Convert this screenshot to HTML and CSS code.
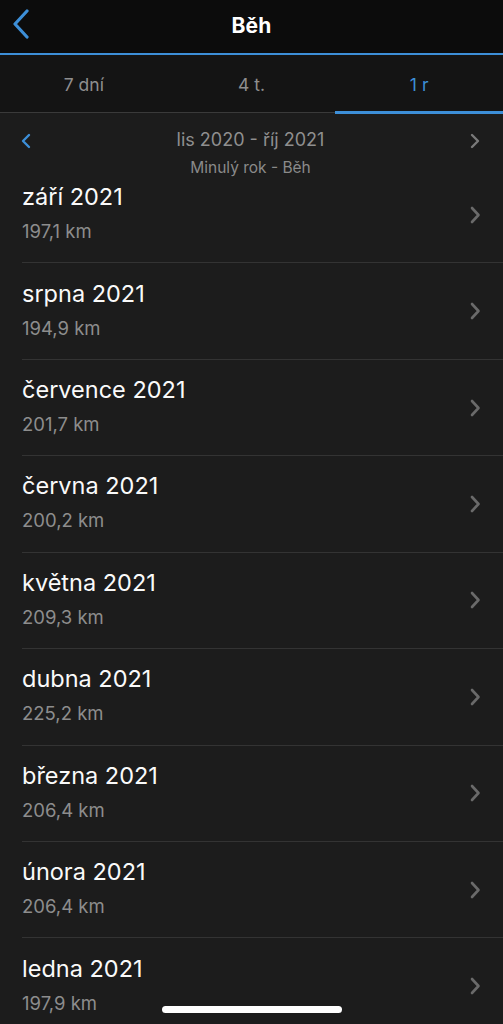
FILE: index.html
```html
<!DOCTYPE html>
<html lang="cs">
<head>
<meta charset="utf-8">
<title>Běh</title>
<link rel="stylesheet" href="styles.css">
</head>
<body>
<div class="app">
  <header class="nav">
    <svg class="back" width="22" height="30" viewBox="0 0 22 30"><path d="M17 2 L5 15 L17 28" fill="none" stroke="#3d8fd8" stroke-width="3.2" stroke-linecap="round" stroke-linejoin="round"/></svg>
    <h1 class="nav-title">Běh</h1>
  </header>
  <nav class="tabs">
    <div class="tab">7 dní</div>
    <div class="tab">4 t.</div>
    <div class="tab active">1 r</div>
  </nav>
  <section class="period">
    <svg class="pchev left" width="12" height="16" viewBox="0 0 12 16"><path d="M9 2 L3 8 L9 14" fill="none" stroke="#3d8fd8" stroke-width="2.4" stroke-linecap="round" stroke-linejoin="round"/></svg>
    <div class="period-text">
      <div class="period-range">lis 2020 - říj 2021</div>
      <div class="period-sub">Minulý rok - Běh</div>
    </div>
    <svg class="pchev right" width="12" height="16" viewBox="0 0 12 16"><path d="M3 2 L9 8 L3 14" fill="none" stroke="#7a7a7a" stroke-width="2.4" stroke-linecap="round" stroke-linejoin="round"/></svg>
  </section>
  <ul class="list">
    <li class="item"><div class="item-text"><div class="item-title">září 2021</div><div class="item-sub">197,1 km</div></div><svg class="chev" width="12" height="18" viewBox="0 0 12 18"><path d="M3 2 L9.5 9 L3 16" fill="none" stroke="#6a6a6a" stroke-width="2.6" stroke-linecap="round" stroke-linejoin="round"/></svg></li>
    <li class="item"><div class="item-text"><div class="item-title">srpna 2021</div><div class="item-sub">194,9 km</div></div><svg class="chev" width="12" height="18" viewBox="0 0 12 18"><path d="M3 2 L9.5 9 L3 16" fill="none" stroke="#6a6a6a" stroke-width="2.6" stroke-linecap="round" stroke-linejoin="round"/></svg></li>
    <li class="item"><div class="item-text"><div class="item-title">července 2021</div><div class="item-sub">201,7 km</div></div><svg class="chev" width="12" height="18" viewBox="0 0 12 18"><path d="M3 2 L9.5 9 L3 16" fill="none" stroke="#6a6a6a" stroke-width="2.6" stroke-linecap="round" stroke-linejoin="round"/></svg></li>
    <li class="item"><div class="item-text"><div class="item-title">června 2021</div><div class="item-sub">200,2 km</div></div><svg class="chev" width="12" height="18" viewBox="0 0 12 18"><path d="M3 2 L9.5 9 L3 16" fill="none" stroke="#6a6a6a" stroke-width="2.6" stroke-linecap="round" stroke-linejoin="round"/></svg></li>
    <li class="item"><div class="item-text"><div class="item-title">května 2021</div><div class="item-sub">209,3 km</div></div><svg class="chev" width="12" height="18" viewBox="0 0 12 18"><path d="M3 2 L9.5 9 L3 16" fill="none" stroke="#6a6a6a" stroke-width="2.6" stroke-linecap="round" stroke-linejoin="round"/></svg></li>
    <li class="item"><div class="item-text"><div class="item-title">dubna 2021</div><div class="item-sub">225,2 km</div></div><svg class="chev" width="12" height="18" viewBox="0 0 12 18"><path d="M3 2 L9.5 9 L3 16" fill="none" stroke="#6a6a6a" stroke-width="2.6" stroke-linecap="round" stroke-linejoin="round"/></svg></li>
    <li class="item"><div class="item-text"><div class="item-title">března 2021</div><div class="item-sub">206,4 km</div></div><svg class="chev" width="12" height="18" viewBox="0 0 12 18"><path d="M3 2 L9.5 9 L3 16" fill="none" stroke="#6a6a6a" stroke-width="2.6" stroke-linecap="round" stroke-linejoin="round"/></svg></li>
    <li class="item"><div class="item-text"><div class="item-title">února 2021</div><div class="item-sub">206,4 km</div></div><svg class="chev" width="12" height="18" viewBox="0 0 12 18"><path d="M3 2 L9.5 9 L3 16" fill="none" stroke="#6a6a6a" stroke-width="2.6" stroke-linecap="round" stroke-linejoin="round"/></svg></li>
    <li class="item"><div class="item-text"><div class="item-title">ledna 2021</div><div class="item-sub">197,9 km</div></div><svg class="chev" width="12" height="18" viewBox="0 0 12 18"><path d="M3 2 L9.5 9 L3 16" fill="none" stroke="#6a6a6a" stroke-width="2.6" stroke-linecap="round" stroke-linejoin="round"/></svg></li>
  </ul>
  <div class="home-indicator"></div>
</div>
</body>
</html>
```
FILE: styles.css
```css
* { box-sizing: border-box; }
html, body {
  margin: 0;
  padding: 0;
  background: #1c1c1c;
  font-family: Inter, "Open Sans", "Liberation Sans", sans-serif;
  color: #fff;
}
.app {
  width: 503px;
  height: 1024px;
  overflow: hidden;
  background: #1c1c1c;
}
.nav {
  height: 55px;
  background: #0c0c0c;
  border-bottom: 2px solid #3d8fd8;
  display: flex;
  align-items: center;
  justify-content: center;
  position: relative;
}
.back {
  position: absolute;
  left: 10px;
  top: 9px;
}
.nav-title {
  margin: 0 0 3px;
  font-size: 21px;
  font-weight: 700;
  letter-spacing: 0.2px;
}
.tabs {
  height: 58px;
  background: #141414;
  display: flex;
  border-bottom: 1px solid #3a3a3a;
}
.tab {
  flex: 1;
  display: flex;
  align-items: center;
  justify-content: center;
  font-size: 17.5px;
  color: #8f8f8f;
  padding-top: 2px;
  border-bottom: 3px solid transparent;
  margin-bottom: -2px;
}
.tab.active {
  color: #3d8fd8;
  border-bottom-color: #3d8fd8;
}
.period {
  height: 54px;
  display: flex;
  align-items: flex-start;
  padding: 15px 20px 0 20px;
}
.pchev { margin-top: 5px; flex: none; }
.pchev.right { margin-right: 2px; }
.period-text {
  flex: 1;
  text-align: center;
}
.period-range {
  font-size: 18px;
  line-height: 24px;
  color: #8f8f8f;
}
.period-sub {
  font-size: 15.5px;
  line-height: 18px;
  margin-top: 7px;
  color: #8a8a8a;
}
.list {
  list-style: none;
  margin: 0;
  padding: 0 0 0 22px;
}
.item {
  height: 96.43px;
  display: flex;
  align-items: center;
  border-bottom: 1px solid #333333;
  padding-right: 22px;
}
.item-text { flex: 1; padding-bottom: 4px; }
.item-title {
  font-size: 23.5px;
  line-height: 28px;
  color: #fafafa;
}
.item-sub {
  font-size: 18.5px;
  line-height: 22px;
  margin-top: 9px;
  color: #8d8d8d;
}
.chev { flex: none; }
.home-indicator {
  position: fixed;
  left: 162px;
  top: 1006px;
  width: 180px;
  height: 7px;
  border-radius: 4px;
  background: #ffffff;
}
```
